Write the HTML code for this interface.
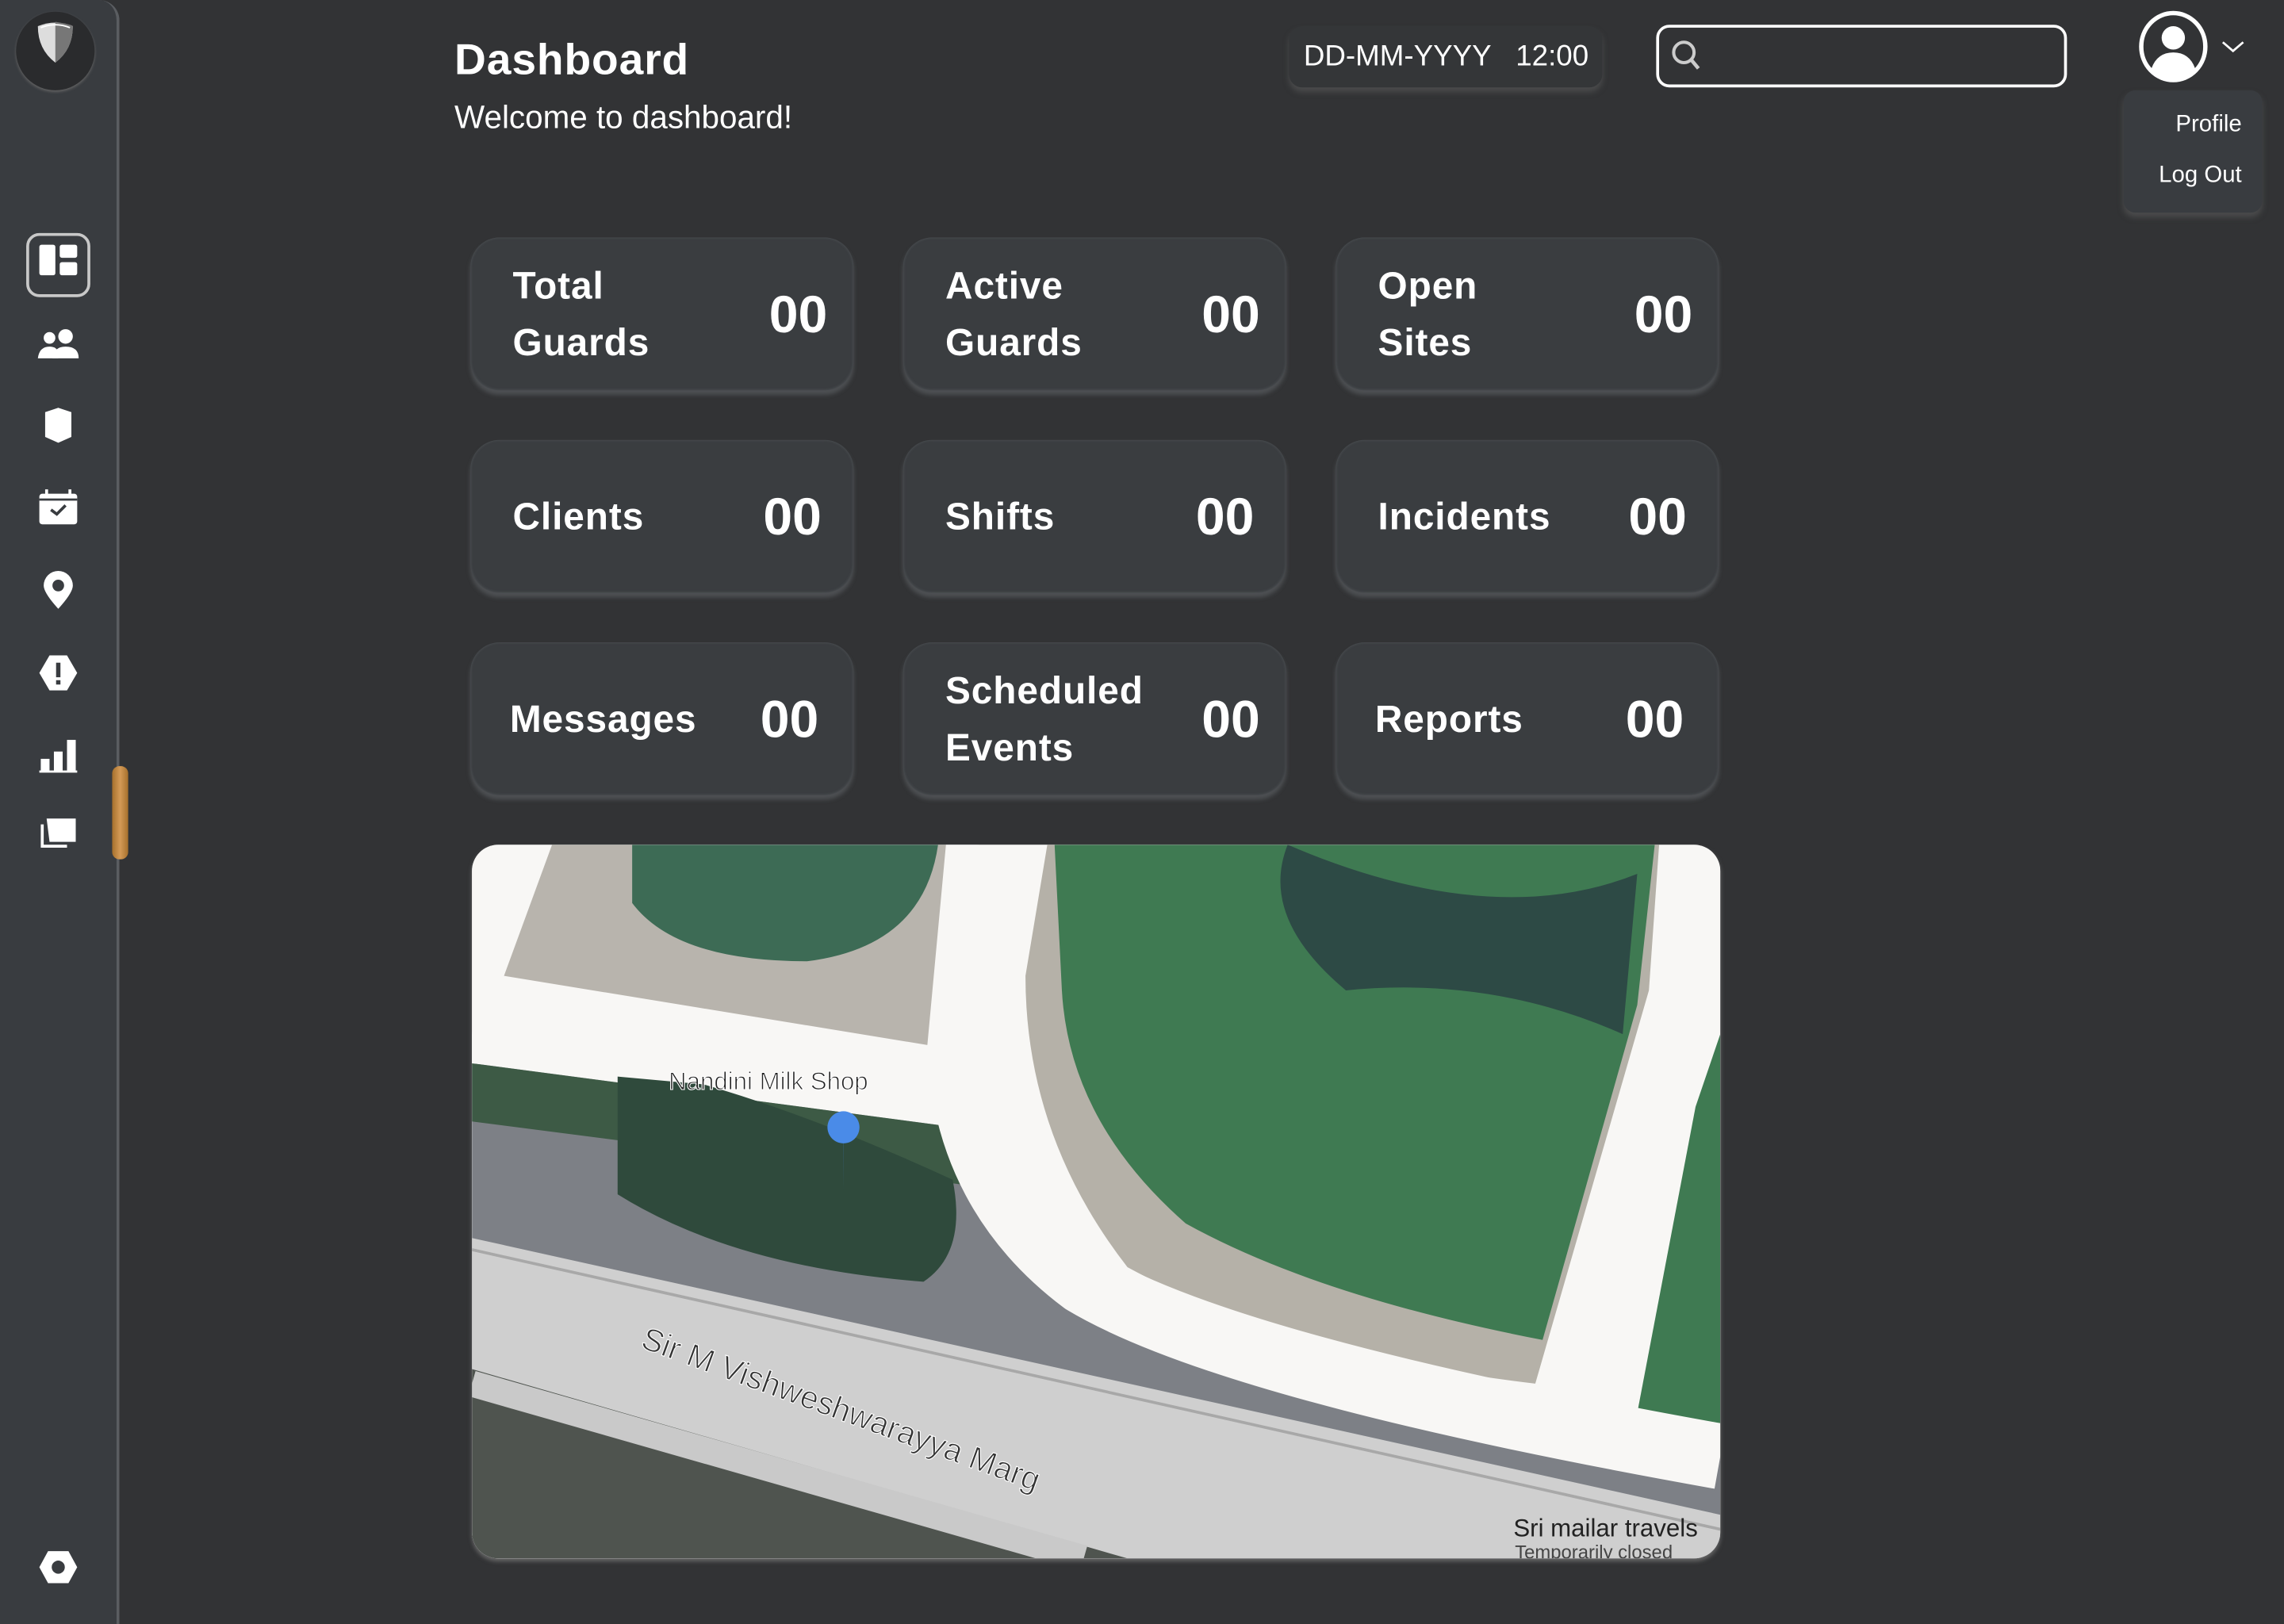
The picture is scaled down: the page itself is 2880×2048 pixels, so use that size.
<!DOCTYPE html>
<html><head><meta charset="utf-8"><style>
html,body{margin:0;padding:0;background:#323335;overflow:hidden}
#w{width:1568px;height:1115px;transform:scale(1.836735);transform-origin:0 0;position:relative;font-family:"Liberation Sans",sans-serif;color:#fff;background:#323335}
.sb{position:absolute;left:0;top:0;width:80px;height:1115px;background:#393c40;border-right:2px solid #5a5d61;border-top-right-radius:14px}
.ic{position:absolute;left:24px;width:32px;height:32px}
.card{position:absolute;width:263px;height:105px;background:#3a3d40;border-radius:20px;box-shadow:0 3px 3px rgba(110,115,120,.45),inset 0 0 2px rgba(120,125,130,.4)}
.card .l{position:absolute;left:29px;top:50%;transform:translateY(-50%);font-size:26px;font-weight:bold;line-height:39px;letter-spacing:.5px}
.card .n{position:absolute;right:18px;top:50%;transform:translateY(-50%);font-size:36px;font-weight:bold}
</style></head><body><div id="w">
<div class="sb">
 <div style="position:absolute;left:11px;top:8px;width:54px;height:54px;border-radius:50%;background:#2a2b2d;box-shadow:0 1px 2px #666"></div>
 <svg style="position:absolute;left:24px;top:14px" width="28" height="30" viewBox="0 0 28 30"><path d="M2 4 Q14 -1 26 4 Q26 20 14 29 Q2 20 2 4Z" fill="#ddd"/><path d="M14 1 Q26 3 26 4 Q26 20 14 29Z" fill="#777"/><path d="M4 5 Q14 1 24 5" stroke="#fff" stroke-width="1" fill="none"/></svg>
 <div style="position:absolute;left:18px;top:160px;width:40px;height:40px;border:2px solid #c8c8c8;border-radius:9px"></div>
 <svg class="ic" style="top:165px" viewBox="0 0 32 32"><rect x="3" y="3" width="11" height="21" rx="1.5" fill="#fff"/><rect x="17" y="3" width="12" height="9" rx="1.5" fill="#fff"/><rect x="17" y="15" width="12" height="9" rx="1.5" fill="#fff"/></svg>
 <svg class="ic" style="top:222px" viewBox="0 0 32 32"><circle cx="10" cy="10" r="4" fill="#fff"/><circle cx="21" cy="9" r="5" fill="#fff"/><path d="M2 24 Q3 16 10 16 Q15 16 16 20 L16 24Z" fill="#fff"/><path d="M12 24 Q13 16 21 16 Q30 16 30 24Z" fill="#fff"/></svg>
 <svg class="ic" style="top:277px" viewBox="0 0 32 32"><path d="M7 6 L16 3 L25 6 L25 23 L16 27 L7 23Z" fill="#fff"/></svg>
 <svg class="ic" style="top:333px" viewBox="0 0 32 32"><rect x="3" y="6" width="26" height="21" rx="2" fill="#fff"/><rect x="7" y="3" width="2" height="5" fill="#fff"/><rect x="23" y="3" width="2" height="5" fill="#fff"/><path d="M3 10 H29" stroke="#393c40" stroke-width="1.5"/><path d="M11 17 L15 20 L21 14" stroke="#393c40" stroke-width="2" fill="none"/></svg>
 <svg class="ic" style="top:389px" viewBox="0 0 32 32"><path d="M16 29 Q6 18 6 13 A10 10 0 0 1 26 13 Q26 18 16 29Z" fill="#fff"/><circle cx="16" cy="13" r="4" fill="#393c40"/></svg>
 <svg class="ic" style="top:446px" viewBox="0 0 32 32"><path d="M10 4 H22 L29 16 L22 28 H10 L3 16Z" fill="#fff"/><rect x="14.5" y="9" width="3" height="10" fill="#393c40"/><rect x="14.5" y="21" width="3" height="3" fill="#393c40"/></svg>
 <svg class="ic" style="top:502px" viewBox="0 0 32 32"><rect x="4" y="19" width="6" height="9" fill="#fff"/><rect x="13" y="14" width="6" height="14" fill="#fff"/><rect x="22" y="6" width="6" height="22" fill="#fff"/><rect x="3" y="27" width="26" height="1.5" fill="#fff"/></svg>
 <svg class="ic" style="top:556px" viewBox="0 0 32 32"><path d="M8 6 H28 V22 H10 Z" fill="#fff"/><path d="M4 10 H6 V24 H22 V26 H4Z" fill="#fff"/></svg>
 <svg class="ic" style="top:1060px" viewBox="0 0 32 32"><path d="M9 5 H23 L29 16 L23 27 H9 L3 16Z" fill="#fff"/><circle cx="16" cy="16" r="4.5" fill="#393c40"/></svg>
</div>
<div style="position:absolute;left:77px;top:526px;width:11px;height:64px;border-radius:5px;background:linear-gradient(90deg,#a6702c,#d49a56,#a6702c)"></div>

<div style="position:absolute;left:312px;top:25px;font-size:30px;font-weight:bold;letter-spacing:.5px">Dashboard</div>
<div style="position:absolute;left:312px;top:68px;font-size:22px">Welcome to dashboard!</div>

<div style="position:absolute;left:885px;top:18px;width:215px;height:42px;border-radius:9px;background:#343638;box-shadow:0 3px 4px rgba(100,100,100,.5)"></div>
<div style="position:absolute;left:895px;top:28px;font-size:20px">DD-MM-YYYY&nbsp;&nbsp; 12:00</div>
<div style="position:absolute;left:1137px;top:17px;width:278px;height:39px;border:2px solid #fff;border-radius:9px"></div>
<svg style="position:absolute;left:1146px;top:26px" width="24" height="24" viewBox="0 0 24 24"><circle cx="10" cy="10" r="7" stroke="#ccc" stroke-width="2.2" fill="none"/><path d="M15 15 L20 21" stroke="#ccc" stroke-width="2.5"/></svg>
<svg style="position:absolute;left:1467px;top:7px" width="80" height="52" viewBox="0 0 80 52"><ellipse cx="25" cy="25" rx="22" ry="23" stroke="#fff" stroke-width="3" fill="none"/><circle cx="25" cy="19" r="8" fill="#fff"/><path d="M10 40 Q14 29 25 29 Q36 29 40 40 Q33 47 25 47 Q17 47 10 40Z" fill="#fff"/><path d="M59 22 L66 28 L73 22" stroke="#fff" stroke-width="1.5" fill="none"/></svg>
<div style="position:absolute;left:1458px;top:62px;width:95px;height:84px;border-radius:8px;background:#393c40;box-shadow:0 3px 4px rgba(100,100,100,.5)"></div>
<div style="position:absolute;left:1458px;top:77px;width:81px;text-align:right;font-size:16px">Profile</div>
<div style="position:absolute;left:1458px;top:112px;width:81px;text-align:right;font-size:16px">Log Out</div>

<div class="card" style="left:323px;top:163px"><div class="l">Total<br>Guards</div><div class="n">00</div></div>
<div class="card" style="left:620px;top:163px"><div class="l">Active<br>Guards</div><div class="n">00</div></div>
<div class="card" style="left:917px;top:163px"><div class="l">Open<br>Sites</div><div class="n">00</div></div>
<div class="card" style="left:323px;top:302px"><div class="l">Clients</div><div class="n" style="right:22px">00</div></div>
<div class="card" style="left:620px;top:302px"><div class="l">Shifts</div><div class="n" style="right:22px">00</div></div>
<div class="card" style="left:917px;top:302px"><div class="l">Incidents</div><div class="n" style="right:22px">00</div></div>
<div class="card" style="left:323px;top:441px"><div class="l" style="left:27px">Messages</div><div class="n" style="right:24px">00</div></div>
<div class="card" style="left:620px;top:441px"><div class="l">Scheduled<br>Events</div><div class="n">00</div></div>
<div class="card" style="left:917px;top:441px"><div class="l" style="left:27px">Reports</div><div class="n" style="right:24px">00</div></div>

<div style="position:absolute;left:324px;top:580px;width:857px;height:490px;border-radius:18px;overflow:hidden;background:#f8f7f5;box-shadow:0 2px 3px #666">
<svg width="857" height="490" viewBox="0 0 857 490">
 <path d="M0 0 H857 V490 H0Z" fill="#f8f7f5"/>
 <path d="M55 0 H330 L328 140 L22 90Z" fill="#b8b4ad"/>
 <path d="M110 0 H320 Q310 70 230 80 Q140 80 110 40Z" fill="#3d6b55"/>
 <path d="M395 0 H815 L808 100 L730 370 Q560 350 450 290 Q380 200 380 90Z" fill="#b5b1a8"/>
 <path d="M400 0 H812 L800 110 L735 340 Q580 310 490 260 Q410 190 405 100Z" fill="#3f7a52"/>
 <path d="M560 0 Q700 60 800 20 L790 130 Q700 90 600 100 Q540 50 560 0Z" fill="#2d4a45"/>
 <path d="M0 150 L340 195 Q360 260 410 310 Q470 360 857 410 V490 H0Z" fill="#7d8086"/>
 <path d="M0 150 L340 195 L350 235 L0 190Z" fill="#3d5a45"/>
 <path d="M100 150 Q200 170 330 230 Q340 280 310 300 Q180 290 100 240Z" fill="#2f4a3c"/>
 <path d="M0 270 L857 460 V490 H0Z" fill="#cfcfcf"/>
 <path d="M0 278 L857 470" stroke="#a8a8a8" stroke-width="2"/>
 <path d="M0 360 L450 490 H0Z" fill="#4f544f"/>
 <path d="M0 370 L420 490" stroke="#c9c9c9" stroke-width="18"/>
 <path d="M840 180 L857 130 V400 L800 390Z" fill="#3f7a52"/>
 <path d="M0 130 L330 160" stroke="#f8f7f5" stroke-width="40"/>
 <path d="M348 0 L335 140 Q340 240 420 300 Q520 360 857 420" stroke="#f8f7f5" stroke-width="45" fill="none"/>
 <path d="M835 100 L760 390" stroke="#f8f7f5" stroke-width="45" fill="none"/>
 <path d="M255 205 a11 11 0 1 1 0.1 0 L255 238Z" fill="#4a8be8"/>
 <text x="135" y="168" font-size="17" fill="#222" font-family="Liberation Sans" stroke="#fff" stroke-width=".6">Nandini Milk Shop</text>
 <text x="115" y="345" font-size="22" fill="#333" font-family="Liberation Sans" transform="rotate(20 115 345)" stroke="#fff" stroke-width=".6">Sir M Vishweshwarayya Marg</text>
 <text x="715" y="475" font-size="17" fill="#222" font-family="Liberation Sans">Sri mailar travels</text>
 <text x="716" y="490" font-size="13" fill="#444" font-family="Liberation Sans">Temporarily closed</text>
</svg></div>
</div></body></html>
